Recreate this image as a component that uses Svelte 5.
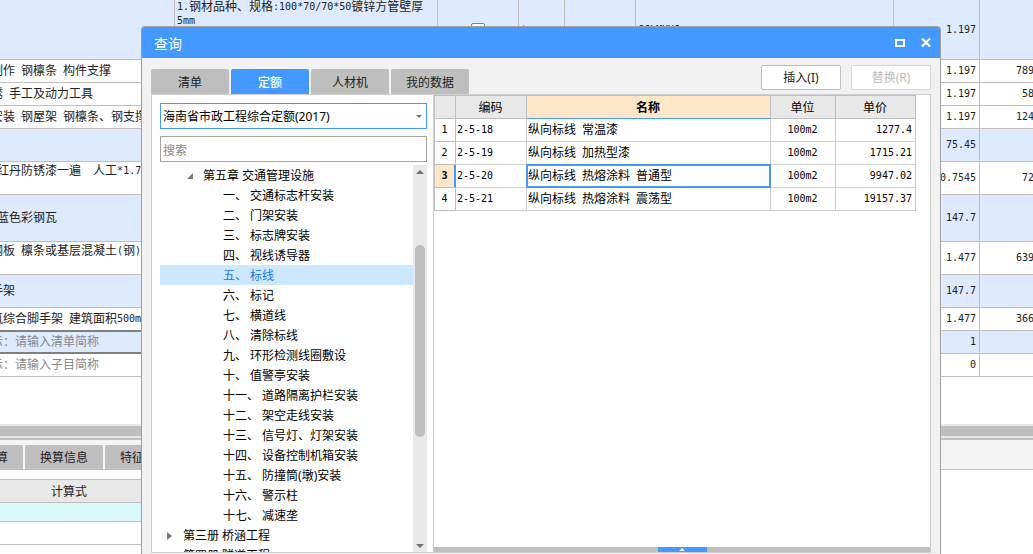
<script>
  const items = [
    { kind: 'list tall', name: '', spec: ['1.钢材品种、规格:100*70/70*50镀锌方管壁厚', '5mm'], check: true, unit: 't', expr: 'GCLMXHJ', qty: '1.197', price: '' },
    { kind: '', name: '制作 钢檩条 构件支撑', qty: '1.197', price: '789' },
    { kind: '', name: '锈 手工及动力工具', qty: '1.197', price: '58' },
    { kind: '', name: '安装 钢屋架 钢檩条、钢支撑', qty: '1.197', price: '124' },
    { kind: 'list mid', name: '', qty: '75.45', price: '' },
    { kind: 'mid wrapped', name: ' 红丹防锈漆一遍  人工*1.7', qty: '0.7545', price: '72' },
    { kind: 'list high', name: ' 蓝色彩钢瓦', qty: '147.7', price: '' },
    { kind: 'mid wrapped', name: '钢板 檩条或基层混凝土(钢)', qty: '1.477', price: '639' },
    { kind: 'list mid', name: '手架', qty: '147.7', price: '' },
    { kind: '', name: '筑综合脚手架 建筑面积500m2', qty: '1.477', price: '366' },
    { kind: 'list hint current', name: '示：请输入清单简称', qty: '1', price: '' },
    { kind: 'hint', name: '示：请输入子目简称', qty: '0', price: '' }
  ];

  const tabs = ['清单', '定额', '人材机', '我的数据'];
  let activeTab = $state('定额');

  const tree = [
    { level: 2, text: '第五章 交通管理设施', open: true },
    { level: 3, text: '一、 交通标志杆安装' },
    { level: 3, text: '二、 门架安装' },
    { level: 3, text: '三、 标志牌安装' },
    { level: 3, text: '四、 视线诱导器' },
    { level: 3, text: '五、 标线' },
    { level: 3, text: '六、 标记' },
    { level: 3, text: '七、 横道线' },
    { level: 3, text: '八、 清除标线' },
    { level: 3, text: '九、 环形检测线圈敷设' },
    { level: 3, text: '十、 值警亭安装' },
    { level: 3, text: '十一、 道路隔离护栏安装' },
    { level: 3, text: '十二、 架空走线安装' },
    { level: 3, text: '十三、 信号灯、灯架安装' },
    { level: 3, text: '十四、 设备控制机箱安装' },
    { level: 3, text: '十五、 防撞筒(墩)安装' },
    { level: 3, text: '十六、 警示柱' },
    { level: 3, text: '十七、 减速垄' },
    { level: 1, text: '第三册 桥涵工程', open: false },
    { level: 1, text: '第四册 隧道工程', open: false }
  ];
  let chosen = $state('五、 标线');

  const quotas = [
    { code: '2-5-18', name: '纵向标线 常温漆', unit: '100m2', price: '1277.4' },
    { code: '2-5-19', name: '纵向标线 加热型漆', unit: '100m2', price: '1715.21' },
    { code: '2-5-20', name: '纵向标线 热熔涂料 普通型', unit: '100m2', price: '9947.02' },
    { code: '2-5-21', name: '纵向标线 热熔涂料 震荡型', unit: '100m2', price: '19157.37' }
  ];
  let current = $state(2);

  // Splits a string into half-width and full-width runs
  const runs = (text) => text.match(/[\x20-\x7e]+|[^\x20-\x7e]+/g) ?? [];
</script>

{#snippet grid(text)}{#each runs(text) as run}{#if run.charCodeAt(0) < 127}<span class="half">{run}</span>{:else}{run}{/if}{/each}{/snippet}

<main class="desk">
  <div class="bill">
    <table class="bill-table">
      <colgroup>
        <col class="c-name" /><col class="c-spec" /><col class="c-check" /><col class="c-unit" />
        <col class="c-rate" /><col /><col class="c-qty" /><col class="c-price" />
      </colgroup>
      <tbody>
        {#each items as item}
          <tr class={item.kind}>
            <td class="name">{@render grid(item.name)}</td>
            <td class="spec">{#each item.spec ?? [] as line}<div>{@render grid(line)}</div>{/each}</td>
            <td class="mark">{#if item.check}<input type="checkbox" aria-label="锁定" />{/if}</td>
            <td>{@render grid(item.unit ?? '')}</td>
            <td></td>
            <td>{@render grid(item.expr ?? '')}</td>
            <td class="num">{@render grid(item.qty)}</td>
            <td class="num last">{@render grid(item.price)}</td>
          </tr>
        {/each}
      </tbody>
    </table>
  </div>
  <div class="hscroll"></div>
  <div class="detail-tabs">
    <button>标准换算</button>
    <button>换算信息</button>
    <button>特征及内容</button>
  </div>
  <table class="detail">
    <thead><tr><th class="formula">计算式</th><th></th></tr></thead>
    <tbody>
      <tr class="fresh"><td></td><td></td></tr>
      <tr><td></td><td></td></tr>
    </tbody>
  </table>

  <section class="dialog" aria-label="查询">
    <header>
      <h1>查询</h1>
      <button aria-label="最大化">
        <svg width="10" height="8" viewBox="0 0 10 8"><rect x="1" y="1" width="8" height="6" fill="none" stroke="#fff" stroke-width="2" /></svg>
      </button>
      <button aria-label="关闭">
        <svg width="10" height="9" viewBox="0 0 10 9"><path d="M1 .5 9 8.500M9 .5 1 8.500" stroke="#fff" stroke-width="2.200" /></svg>
      </button>
    </header>

    <div class="toolbar">
      <div class="tabs">
        {#each tabs as tab}
          <button class:active={tab === activeTab} onclick={() => (activeTab = tab)}>{tab}</button>
        {/each}
      </div>
      <button class="action">插入(I)</button>
      <button class="action" disabled>替换(R)</button>
    </div>

    <div class="panel">
      <div class="side">
        <div class="picker">
          <select aria-label="定额库"><option>海南省市政工程综合定额(2017)</option></select>
          <svg width="6" height="3" viewBox="0 0 6 3"><path d="M0 0h6L3 3z" fill="#777" /></svg>
        </div>
        <input class="search" type="text" placeholder="搜索" aria-label="搜索" />
        <div class="tree-box">
          <ul class="tree">
            {#each tree as node}
              <li>
                <button class="node level{node.level}" class:chosen={node.text === chosen} onclick={() => (chosen = node.text)}>
                  <span class="twist">
                    {#if node.open === true}
                      <svg width="6" height="6" viewBox="0 0 6 6"><path d="M6 0v6H0z" fill="#777" /></svg>
                    {:else if node.open === false}
                      <svg width="6" height="8" viewBox="0 0 6 8"><path d="M0 0l5 4-5 4z" fill="#777" /></svg>
                    {/if}
                  </span>
                  <span>{node.text}</span>
                </button>
              </li>
            {/each}
          </ul>
          <div class="vscroll">
            <span class="arrow"><svg width="8" height="4" viewBox="0 0 8 4"><path d="M0 4 4 0l4 4z" fill="#6f6f78" /></svg></span>
            <span class="before"></span>
            <span class="thumb"></span>
            <span class="after"></span>
            <span class="arrow"><svg width="8" height="4" viewBox="0 0 8 4"><path d="M0 0h8L4 4z" fill="#6f6f78" /></svg></span>
          </div>
        </div>
      </div>

      <div class="result">
        <table class="quota">
          <colgroup><col class="q-no" /><col class="q-code" /><col /><col class="q-unit" /><col class="q-price" /></colgroup>
          <thead>
            <tr><th></th><th>编码</th><th class="sorted">名称</th><th>单位</th><th>单价</th></tr>
          </thead>
          <tbody>
            {#each quotas as q, i}
              <tr class:current={i === current} onclick={() => (current = i)}>
                <th scope="row">{@render grid(String(i + 1))}</th>
                <td>{@render grid(q.code)}</td>
                <td class="title">{@render grid(q.name)}</td>
                <td class="center">{@render grid(q.unit)}</td>
                <td class="num">{@render grid(q.price)}</td>
              </tr>
            {/each}
          </tbody>
        </table>
        <div class="splitter">
          <button aria-label="展开">
            <svg width="6" height="3" viewBox="0 0 6 3"><path d="M0 3 3 0l3 3z" fill="#fff" /></svg>
          </button>
        </div>
      </div>
    </div>
  </section>
</main>

<style>
  :global(body) {
    margin: 0;
    overflow: hidden;
  }
  .desk {
    position: relative;
    display: flex;
    flex-direction: column;
    height: 100vh;
    overflow: hidden;
    background: #fff;
    color: #222;
    font: 12px/14px "Noto Sans", "Noto Sans CJK SC", sans-serif;
  }
  button,
  select,
  input {
    box-sizing: border-box;
    margin: 0;
    padding: 0;
    border: 0;
    background: none;
    color: inherit;
    font: inherit;
  }
  svg {
    display: block;
  }
  table {
    table-layout: fixed;
    border-collapse: separate;
    border-spacing: 0;
  }
  td,
  th {
    box-sizing: border-box;
    padding: 0 2px;
    font-weight: 400;
    white-space: pre;
  }
  .half {
    font-family: "DejaVu Sans Mono", monospace;
    font-size: 10px;
    line-height: 12px;
    vertical-align: 1px;
  }

  .bill {
    flex: 1;
    min-height: 0;
    overflow: hidden;
  }
  .bill-table {
    width: calc(100% + 15px);
    margin-left: -11px;
  }
  .c-name { width: 186px; }
  .c-spec { width: 263px; }
  .c-check { width: 81px; }
  .c-unit { width: 46px; }
  .c-rate { width: 71px; }
  .c-qty { width: 86px; }
  .c-price { width: 57px; }
  .bill-table td {
    height: 23px;
    border-right: 1px solid #bfbfbf;
    border-bottom: 1px solid #bfbfbf;
    overflow: hidden;
  }
  .bill-table .last {
    border-right: 0;
  }
  .bill-table .list td { background: #deeaff; }
  .bill-table .mid td { height: 33px; }
  .bill-table .high td { height: 47px; }
  .bill-table .tall td { height: 60px; }
  .bill-table .spec { vertical-align: top; }
  .bill-table .wrapped .name {
    padding-top: 2px;
    vertical-align: top;
  }
  .bill-table .hint .name { color: #888; }
  .bill-table .current .name {
    position: relative;
    border-bottom-color: #808080;
    box-shadow: 0 -1px #808080, inset 0 1px #808080, inset 0 -1px #808080;
  }
  .bill-table .num,
  .quota .num {
    padding-right: 3px;
    text-align: right;
  }
  .mark {
    text-align: center;
  }
  .mark input {
    width: 14px;
    height: 14px;
    border: 1px solid #808080;
    border-radius: 2px;
    background: #fff;
    appearance: none;
    vertical-align: middle;
  }
  .hscroll {
    height: 10px;
    border: solid #e8e8e8;
    border-width: 2px 0;
    background: #bfbfbf;
  }
  .detail-tabs {
    display: flex;
    gap: 2px;
    padding-top: 5px;
    border-top: 2px solid #bfbfbf;
    border-bottom: 1px solid #bfbfbf;
    background: #f4f4f4;
  }
  .detail-tabs button {
    flex: none;
    height: 24px;
    padding: 2px 15px 0;
    border-radius: 2px 2px 0 0;
    background: #bfbfbf;
    white-space: nowrap;
  }
  .detail-tabs button:first-child {
    margin-left: -55px;
  }
  .detail {
    width: 60%;
    margin: 9px 0;
  }
  .detail th,
  .detail td {
    height: 23px;
    border-bottom: 1px solid #bfbfbf;
  }
  .detail th {
    height: 24px;
    padding-top: 2px;
    border-top: 1px solid #bfbfbf;
    background: #e8e8e8;
  }
  .detail .formula { width: 138px; }
  .detail .fresh td {
    height: 19px;
    background: #d9f8f8;
  }

  .dialog {
    position: absolute;
    top: 26px;
    right: 92px;
    bottom: 0;
    left: 141px;
    display: flex;
    flex-direction: column;
    border: 1px solid #a0a0a0;
    border-bottom: 0;
    border-radius: 4px 4px 0 0;
    background: #f1f1f1;
    overflow: hidden;
  }
  header {
    display: flex;
    align-items: center;
    gap: 16px;
    flex: none;
    height: 31px;
    padding: 0 9px 0 12px;
    background: #4499ff;
    color: #fff;
  }
  h1 {
    flex: 1;
    margin: 0;
    padding-top: 2px;
    font-size: 14px;
    font-weight: 400;
    line-height: 20px;
  }
  .toolbar {
    display: flex;
    align-items: center;
    gap: 10px;
    flex: none;
    height: 36px;
    padding: 0 9px;
  }
  .tabs {
    display: flex;
    flex: 1;
    align-self: flex-end;
    gap: 2px;
  }
  .tabs button {
    width: 78px;
    height: 25px;
    padding-top: 2px;
    border-radius: 2px 2px 0 0;
    background: #bfbfbf;
  }
  .tabs .active {
    background: #4499ff;
    color: #fff;
    font-weight: 500;
  }
  .action {
    width: 80px;
    height: 25px;
    margin-top: 2px;
    padding-top: 2px;
    border: 1px solid #bfbfbf;
    border-radius: 2px;
    background: #fff;
  }
  .action:disabled {
    border-color: #d8d8d8;
    color: #bbb;
  }
  .panel {
    display: flex;
    flex: 1;
    min-height: 0;
    margin: 0 9px 1px;
    border: 1px solid #d0d0d0;
    background: #fff;
    color: #000;
  }
  .side {
    box-sizing: border-box;
    display: flex;
    flex: none;
    flex-direction: column;
    width: 282px;
    padding: 8px 6px 0 8px;
    border-right: 1px solid #d0d0d0;
  }
  .picker {
    position: relative;
  }
  .picker select {
    display: block;
    width: 100%;
    height: 26px;
    padding: 2px 2px 0;
    border: 1px solid #4499ff;
    appearance: none;
  }
  .picker svg {
    position: absolute;
    top: 12px;
    right: 5px;
    pointer-events: none;
  }
  .search {
    height: 26px;
    margin: 7px 0 3px;
    padding: 2px 2px 0;
    border: 1px solid #a6a6a6;
  }
  .search::placeholder {
    color: #888;
  }
  .tree-box {
    display: flex;
    flex: 1;
    min-height: 0;
  }
  .tree {
    flex: 1;
    margin: 0;
    padding: 0;
    overflow: hidden;
    list-style: none;
  }
  .node {
    display: flex;
    align-items: center;
    width: 100%;
    height: 20px;
    padding-top: 2px;
    text-align: left;
    white-space: pre;
  }
  .level1 { padding-left: 7px; }
  .level2 { padding-left: 27px; }
  .level3 { padding-left: 47px; }
  .twist {
    flex: none;
    width: 16px;
  }
  .chosen {
    background: #cce8ff;
    color: #1a73e8;
  }
  .vscroll {
    display: flex;
    flex-direction: column;
    align-items: center;
    width: 14px;
    background: #e8e8e8;
  }
  .arrow {
    display: flex;
    align-items: center;
    flex: none;
    height: 13px;
  }
  .before { flex: 67; }
  .thumb {
    flex: 192;
    width: 10px;
    border-radius: 5px;
    background: #bfbfbf;
  }
  .after { flex: 102; }

  .result {
    display: flex;
    flex: 1;
    flex-direction: column;
    min-width: 0;
  }
  .quota {
    width: calc(100% - 14px);
    border: solid #bfbfbf;
    border-width: 1px 0 0 1px;
  }
  .q-no { width: 21px; }
  .q-code { width: 71px; }
  .q-unit { width: 65px; }
  .q-price { width: 80px; }
  .quota th,
  .quota td {
    height: 23px;
    padding-left: 1px;
    border-right: 1px solid #d0d0d0;
    border-bottom: 1px solid #d0d0d0;
  }
  .quota th {
    border-color: #bfbfbf;
    text-align: center;
  }
  .quota thead th {
    padding-top: 2px;
    background: #e8e8e8;
  }
  .quota thead .sorted {
    border-bottom-color: #4499ff;
    background: #ffe6c8;
    font-weight: 700;
  }
  .quota .center {
    text-align: center;
  }
  .quota .current th {
    border-right-color: #4499ff;
    background: #ffe6c8;
    box-shadow: inset -1px 0 #4499ff;
    font-weight: 700;
  }
  .quota .title {
    position: relative;
  }
  .quota .current .title::after {
    position: absolute;
    inset: -1px;
    border: 2px solid #4499ff;
    content: "";
  }
  .splitter {
    display: flex;
    justify-content: center;
    height: 5px;
    margin-top: auto;
    background: #bfbfbf;
  }
  .splitter button {
    display: flex;
    align-items: center;
    justify-content: center;
    width: 49px;
    background: #4499ff;
  }
</style>
